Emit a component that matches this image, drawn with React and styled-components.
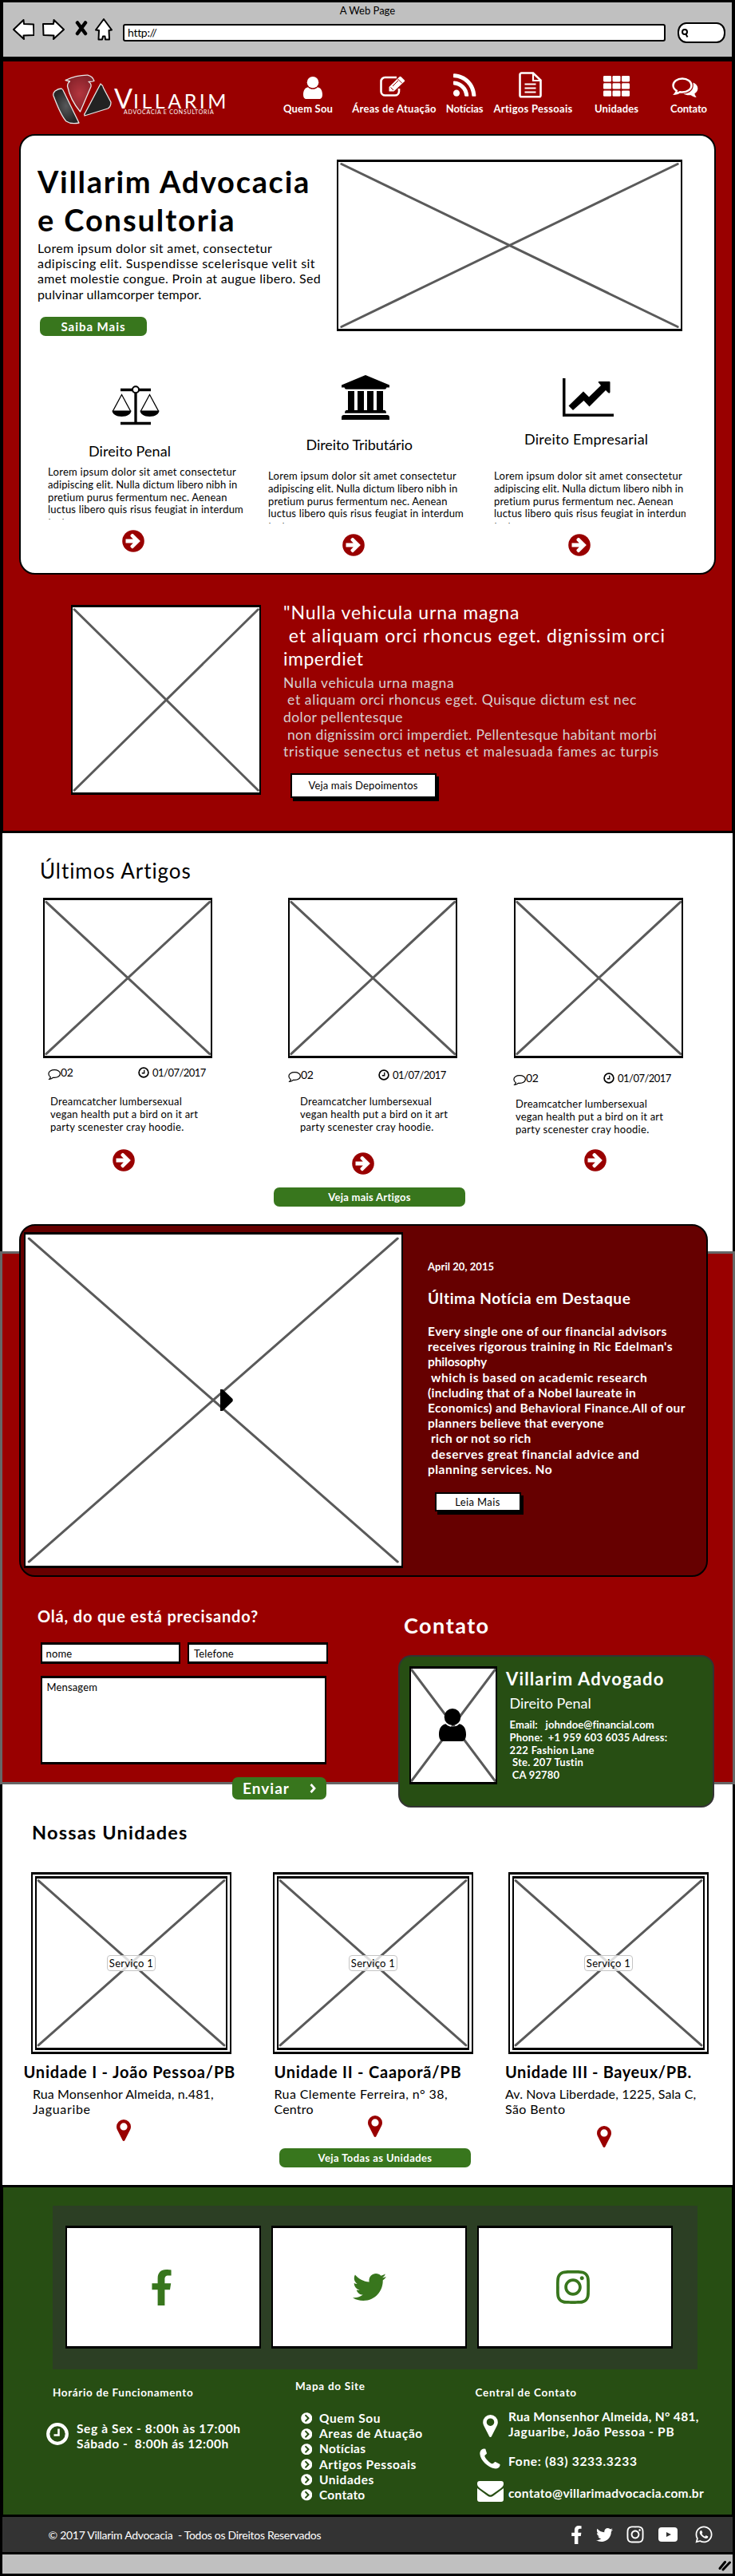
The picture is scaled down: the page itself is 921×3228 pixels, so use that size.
import React from 'react';
import styled, { createGlobalStyle, css } from 'styled-components';
import {
  FaRss, FaFacebookF, FaTwitter, FaInstagram, FaWhatsapp, FaChevronCircleRight,
} from 'react-icons/fa';

const color = {
  red: '#990000',
  darkRed: '#660000',
  green: '#38761d',
  darkGreen: '#274e13',
  chrome: '#c0c0c0',
  ink: '#000',
};

const GlobalStyle = createGlobalStyle`
  *, *::before, *::after { box-sizing: border-box; }
  body { margin: 0; background: #fff; color: #000; font-family: Lato, "Liberation Sans", sans-serif; }
  svg { display: block; flex: none; }
  h1, h2, h3, p, ul { margin: 0; padding: 0; font-weight: inherit; }
`;

/* ---------- shared parts ---------- */

const space = css`
  margin-top: ${(p) => p.$mt || 0}px;
  margin-left: ${(p) => p.$ml || 0}px;
`;

const TextBlock = styled.div`
  ${space}
  font-size: ${(p) => p.$size}px;
  line-height: ${(p) => p.$lh}px;
  font-weight: ${(p) => (p.$bold ? 700 : 400)};
  color: ${(p) => p.$color || 'inherit'};
  white-space: pre;
  ${(p) => p.$clip && css`height: ${p.$clip}px; overflow: hidden;`}
`;

const Line = styled.span`
  display: block;
  letter-spacing: ${(p) => p.$ls}px;
`;

function Copy({ lines, as, ...rest }) {
  return (
    <TextBlock as={as} {...rest}>
      {lines.map(([text, ls], i) => <Line key={i} $ls={ls || 0}>{text}</Line>)}
    </TextBlock>
  );
}

const ImageBox = styled.div`
  ${space}
  position: relative;
  flex: none;
  width: ${(p) => p.$w}px;
  height: ${(p) => p.$h}px;
  background: #fff;
  border: 2px solid #000;
  border-top-width: 3px;
  border-bottom-width: 3px;
`;

const Cross = styled.svg`
  width: 100%;
  height: 100%;
  line { stroke: #5a5a5a; stroke-width: 3; stroke-linecap: round; vector-effect: non-scaling-stroke; }
`;

const Overlay = styled.div`
  position: absolute;
  left: ${(p) => p.$x}px;
  top: ${(p) => p.$y}px;
`;

function Placeholder({ children, ...rest }) {
  return (
    <ImageBox {...rest}>
      <Cross viewBox="0 0 100 100" preserveAspectRatio="none">
        <line x1="0.9" y1="1.2" x2="99.1" y2="98.8" />
        <line x1="99.1" y1="1.2" x2="0.9" y2="98.8" />
      </Cross>
      {children}
    </ImageBox>
  );
}

const GreenButton = styled.button`
  ${space}
  display: flex;
  align-items: center;
  justify-content: center;
  width: ${(p) => p.$w}px;
  height: ${(p) => p.$h || 24}px;
  padding: 0;
  border: 0;
  border-radius: 7px;
  background: ${color.green};
  color: #fff;
  font: 700 ${(p) => p.$size || 13}px/16px Lato, sans-serif;
  letter-spacing: ${(p) => p.$ls || 0}px;
  white-space: pre;
`;

const PlainButton = styled.button`
  ${space}
  display: block;
  width: ${(p) => p.$w}px;
  height: ${(p) => p.$h}px;
  padding: 0;
  border: 2px solid #000;
  background: #fff;
  box-shadow: 3px 4px 0 #000;
  color: #000;
  font: 400 13px/16px Lato, sans-serif;
  letter-spacing: ${(p) => p.$ls}px;
`;

const IconSlot = styled.span`
  ${space}
  display: block;
  flex: none;
  color: ${(p) => p.$color || 'inherit'};
  width: max-content;
`;

const Column = styled.div`
  flex: none;
  width: ${(p) => p.$w}px;
`;

/* ---------- icons ---------- */

const ArrowCircle = () => (
  <svg width="28" height="28" viewBox="0 0 28 28">
    <circle cx="14" cy="14" r="13.8" fill={color.red} />
    <path d="M4.5 11.6h9.3l-3-3.2a1.6 1.6 0 0 1 0-2.2l1-1a1.6 1.6 0 0 1 2.2 0l8.9 8.8-8.9 8.8a1.6 1.6 0 0 1-2.2 0l-1-1a1.6 1.6 0 0 1 0-2.2l3-3.2H4.5z" fill="#fff" />
  </svg>
);

const PinIcon = ({ w = 18, h = 27 }) => (
  <svg width={w} height={h} viewBox="0 0 18 27" fill="currentColor">
    <path fillRule="evenodd" d="M9 0a9 9 0 0 1 9 9c0 1.600-.4 2.900-1 4.100L10.300 26.200a1.500 1.500 0 0 1-2.600 0L1 13.100C.4 11.900 0 10.600 0 9a9 9 0 0 1 9-9zm0 4.300a4.600 4.600 0 1 0 0 9.200 4.600 4.600 0 0 0 0-9.200z" />
  </svg>
);

const ClockIcon = ({ size, stroke }) => (
  <svg width={size} height={size} viewBox="0 0 28 28" fill="none" stroke="currentColor" strokeWidth={stroke}>
    <circle cx="14" cy="14" r="11.800" />
    <path d="M15.500 7.500v8h-6" strokeWidth="2.600" />
  </svg>
);

const PersonIcon = ({ w, h }) => (
  <svg width={w} height={h} viewBox="0 0 34 41" preserveAspectRatio="none" fill="currentColor">
    <ellipse cx="17" cy="10.500" rx="10.300" ry="10.500" />
    <path d="M8.500 19.300C11 22 14 23 17 23s6-1 8.500-3.700c5.500 1 8.500 6 8.500 13.200 0 6-2.500 8.500-5.500 8.500h-23C2.500 41 0 38.500 0 32.500c0-7.200 3-12.200 8.500-13.200z" />
  </svg>
);

const EditIcon = () => (
  <svg width="32" height="26" viewBox="0 0 32 26" fill="none" stroke="#fff">
    <path d="M21 2H6.500A5 5 0 0 0 1.500 7v12.500a5 5 0 0 0 5 5H19a5 5 0 0 0 5-5V16" strokeWidth="2.600" />
    <path d="M11.500 19.500v-5.500L24.500 1.200a1.500 1.500 0 0 1 2.100 0l4 4a1.500 1.500 0 0 1 0 2.100L17.500 19.500z" fill="#fff" stroke="none" />
    <path d="M22.300 3.800l5.500 5.500M13.500 14.500l3.500 3.500M16 13l7-7" stroke={color.red} strokeWidth="1" />
  </svg>
);

const FileIcon = () => (
  <svg width="29" height="33" viewBox="0 0 29 33" fill="none" stroke="#fff" strokeWidth="2.600">
    <path d="M3.500 1.500h14.500L27.500 10.500v19a1.800 1.800 0 0 1-1.800 1.800H3.300a1.800 1.800 0 0 1-1.800-1.800v-26a2 2 0 0 1 2-2z" />
    <path d="M18 2v9h9M7.500 15.500h14M7.500 20.500h14M7.500 25.500h14" strokeWidth="2.200" />
  </svg>
);

const GridIcon = () => (
  <svg width="33" height="26" viewBox="0 0 33 26" fill="#fff">
    {[0, 9.2, 18.4].map((y) => [0, 11.5, 23].map((x) => (
      <rect key={`${x}-${y}`} x={x} y={y} width="10" height="7.400" rx="1.300" />
    )))}
  </svg>
);

const CommentsIcon = () => (
  <svg width="33" height="26" viewBox="0 0 33 26" fill="none" stroke="#fff" strokeWidth="2.400">
    <path d="M13 1.500c6.500 0 11.500 3.700 11.500 8.500s-5 8.500-11.500 8.500c-1 0-2-.1-3-.3-1.800 1.300-3.600 2-6 2.300 1-1.200 1.700-2.300 1.900-3.800C3.200 15.200 1.500 12.800 1.500 10c0-4.800 5-8.500 11.500-8.500z" />
    <path d="M26.500 6.500c3.700 1.500 5.900 4.200 5.900 7.300 0 2.600-1.500 4.900-4 6.500.3 1.700 1 3 2.300 4.700-3-.3-5-1.300-7-2.800-3.300.5-6.900-.1-9.400-1.600 8-.3 14-5 12.200-14.100z" fill="#fff" stroke="none" />
  </svg>
);

const ScalesIcon = () => (
  <svg width="60" height="50" viewBox="0 0 60 50" fill="none" stroke="#000">
    <path d="M11 5.500h38M11 47.500h38M30 8v39" strokeWidth="3.300" />
    <circle cx="30" cy="5.300" r="4" fill="#fff" strokeWidth="2" />
    <path d="M1.500 32L12.500 11.500 23.500 32M36.500 32L47.500 11.500 58.500 32" strokeWidth="1.300" />
    <path d="M.5 31.500h24c0 4-5 7.500-12 7.500s-12-3.500-12-7.500zM35.500 31.500h24c0 4-5 7.500-12 7.500s-12-3.500-12-7.500z" fill="#000" stroke="none" />
  </svg>
);

const BankIcon = () => (
  <svg width="60" height="56" viewBox="0 0 60 56" fill="#000">
    <path d="M30 0L60 12.500V15.500H56.500Q56 17.800 54 17.800H6Q4 17.800 3.500 15.500H0V12.500z" />
    <path d="M8 20h8v24h4V20h8v24h4V20h8v24h4V20h8v24h1.500q2.500 0 2.500 3.800H4Q4 44 6.500 44H8zM3 50h54q3 0 3 3v3H0v-3q0-3 3-3z" />
  </svg>
);

const ChartIcon = () => (
  <svg width="64" height="48" viewBox="0 0 64 48">
    <path d="M0 0h3.500v44.500H64V48H0z" />
    <path d="M7.500 34.500L26 16.500l7 7L48 9 45 5.500Q44 4 46 4H58.500Q59.500 4 59.500 5V17.500Q59 19.500 57 18L54 15 33.500 35.500 26.500 28 13 40z" />
  </svg>
);

const BubbleIcon = () => (
  <svg width="16" height="13" viewBox="0 0 16 13" fill="none" stroke="#000" strokeWidth="1.200">
    <path d="M8.200.7c4 0 7.200 2.100 7.200 4.800s-3.200 4.800-7.200 4.800h-1.600C5.200 11.600 3.600 12.300 1.800 12.400c.9-.9 1.400-1.700 1.500-2.900C1.700 8.600.9 7.100.9 5.500.9 2.800 4.200.7 8.200.7z" />
  </svg>
);

const PlayIcon = () => (
  <svg width="16" height="27" viewBox="0 0 16 27"><path d="M0 0h3L15.500 12Q16 13.500 15.500 15L3 27H0z" /></svg>
);

const PhoneIcon = () => (
  <svg width="26" height="26" viewBox="0 0 26 26" fill="#fff">
    <path d="M5.500.4L7.300.8 9 6.200C9.200 7 6.500 8.300 6.300 9.400c.3 2.800 6.500 9.300 9.500 9.900 1.200.1 3-2.500 4-2.300L25.500 20v1.500C25 24.500 21.500 25.800 18.500 25.300 10.500 24 1 15 .4 7.200.2 4 1.700.8 5.500.4z" />
  </svg>
);

const MailIcon = () => (
  <svg width="33" height="26" viewBox="0 0 33 26" fill="#fff">
    <path d="M3 0h27a3 3 0 0 1 3 3v1c0 2-2 4-4 5.500L19 16.500c-2 1.400-3 1.400-5 0L4 9.500C2 8 0 6 0 4V3a3 3 0 0 1 3-3z" />
    <path d="M0 9l12.500 9.200c3 2 5 2 8 0L33 9v14a3 3 0 0 1-3 3H3a3 3 0 0 1-3-3z" />
  </svg>
);

const VideoIcon = () => (
  <svg width="24" height="18" viewBox="0 0 24 18">
    <rect width="24" height="18" rx="4" fill="#fff" />
    <path d="M10 6l6 3-6 3z" fill="#333" />
  </svg>
);

/* ---------- browser chrome ---------- */

const Chrome = styled.header`
  height: 77px;
  background: ${color.chrome};
  border: solid #000;
  border-width: 3px 4px 6px;
  padding-top: 2px;
`;

const ChromeTitle = styled.div`
  text-align: center;
  font-size: 13px;
  line-height: 16px;
`;

const ChromeBar = styled.div`
  display: flex;
  align-items: flex-start;
  margin-top: 2px;
  padding-left: 12px;
`;

const UrlField = styled.div`
  margin: 7px 0 0 13px;
  width: 680px;
  height: 22px;
  background: #fff;
  border: 2px solid #000;
  border-radius: 3px;
  padding-left: 4px;
  font-size: 14px;
  line-height: 18px;
  letter-spacing: -0.3px;
`;

const SearchField = styled.div`
  margin: 5px 0 0 15px;
  width: 60px;
  height: 26px;
  background: #fff;
  border: 2px solid #000;
  border-radius: 11px / 12px;
  padding: 6px 0 0 2px;
`;

function BrowserTop() {
  const line = { fill: '#fff', stroke: '#000', strokeWidth: 2, strokeLinejoin: 'round' };
  return (
    <Chrome>
      <ChromeTitle>A Web Page</ChromeTitle>
      <ChromeBar>
        <IconSlot $mt={1}><svg width="27" height="26" viewBox="0 0 27 26"><path {...line} d="M1 13L13.500 1l.5 5 12 .5.500 13.500-13 .5.500 4.500z" /></svg></IconSlot>
        <IconSlot $mt={1} $ml={10}><svg width="28" height="26" viewBox="0 0 28 26"><path {...line} d="M27 13L14.500 1l-.5 5L1 6l.5 14 13 .5L14 25z" /></svg></IconSlot>
        <IconSlot $mt={3} $ml={13}><svg width="16" height="19" viewBox="0 0 16 19" fill="none" stroke="#000" strokeWidth="4.500" strokeLinecap="round"><path d="M3 2.500L13 16M13 2.500L3 16" /></svg></IconSlot>
        <IconSlot $ml={9}><svg width="22" height="28" viewBox="0 0 22 28"><path {...line} d="M11 1l10 13.500-3.500.5.500 11.500h-5l-.5-4h-2.500l-1 4H4.500L5 15l-4-.5z" /></svg></IconSlot>
        <UrlField>http://</UrlField>
        <SearchField><svg width="11" height="12" viewBox="0 0 11 12" fill="none" stroke="#000" strokeWidth="2"><circle cx="5" cy="4" r="3" /><path d="M6.500 7L8.500 10.500" /></svg></SearchField>
      </ChromeBar>
    </Chrome>
  );
}

/* ---------- top red section ---------- */

const TopSection = styled.section`
  height: 964px;
  background: ${color.red};
  border: solid #000;
  border-width: 0 4px;
`;

const SiteHeader = styled.div`
  display: flex;
  height: 91px;
  padding-left: 62px;
  color: #fff;
`;

const Wordmark = styled.div`
  width: 141px;
  margin: 37px 0 0 3px;
  font-size: 25px;
  line-height: 24px;
  letter-spacing: 3.5px;
  white-space: nowrap;
  big { font-size: 34px; line-height: 0; letter-spacing: 1px; }
`;

const Tagline = styled.div`
  margin: -2px 0 0 12px;
  font-size: 7px;
  line-height: 8px;
  letter-spacing: 0.75px;
`;

const Nav = styled.nav`
  display: flex;
  margin-left: 71px;
`;

const NavItem = styled.a`
  display: flex;
  flex-direction: column;
  align-items: center;
  width: ${(p) => p.$w}px;
  margin-left: ${(p) => p.$gap}px;
  font-size: 13px;
  font-weight: 700;
  line-height: 16px;
  letter-spacing: ${(p) => p.$ls}px;
  white-space: nowrap;
`;

const NavIcon = styled.span`
  display: flex;
  align-items: flex-end;
  height: 47px;
  padding: 0 ${(p) => p.$right || 0}px ${(p) => p.$bottom ?? 3}px ${(p) => p.$left || 0}px;
  margin-bottom: 4px;
`;

const Logo = () => (
  <IconSlot $mt={16}>
    <svg width="74" height="63" viewBox="0 0 74 63" stroke="#e8e8e8" strokeWidth="1.300" strokeLinejoin="round">
      <defs>
        <radialGradient id="steel"><stop offset="0" stopColor="#58595b" /><stop offset="1" stopColor="#262626" /></radialGradient>
        <radialGradient id="ruby"><stop offset="0" stopColor="#b3363f" /><stop offset="1" stopColor="#87222a" /></radialGradient>
      </defs>
      <path fill="url(#steel)" d="M3 21Q7 18 11 18q2 1 3 4L33 61q-10 2-16-2C11 53 4 35 1 27q-1-3 2-6z" />
      <path fill="url(#ruby)" d="M16 7.500C26 3 36 1 44 1.200c5 1.300 7 4 8 7.300-2 .8-4 1-7 1 2 1 3.500 3 3 6L34.500 47Q22 32 18.500 15q0-4 3-6z" />
      <path fill="#222" d="M60 12q3 2 3.500 5L73 35q0 6-4 8L40 52q-1-2 1-4z" />
    </svg>
  </IconSlot>
);

const nav = [
  { t: 'Quem Sou', w: 62, gap: 0, ls: 0.19, bottom: 0, left: 12, icon: <PersonIcon w={24} h={28} /> },
  { t: 'Áreas de Atuação', w: 106, gap: 24, ls: 0.3, right: 4, icon: <EditIcon /> },
  { t: 'Notícias', w: 47, gap: 11.500, ls: -0.06, icon: <FaRss size={29} viewBox="10 28 438 456" /> },
  { t: 'Artigos Pessoais', w: 99, gap: 13, ls: 0.3, right: 7, bottom: 1, icon: <FileIcon /> },
  { t: 'Unidades', w: 55, gap: 27.500, ls: 0.13, icon: <GridIcon /> },
  { t: 'Contato', w: 46, gap: 40, ls: -0.13, right: 9, bottom: 1, icon: <CommentsIcon /> },
];

const HeroPanel = styled.div`
  width: 873px;
  height: 552px;
  margin-left: 20px;
  background: #fff;
  border: 2px solid #000;
  border-radius: 20px;
`;

const HeroRow = styled.div`
  display: flex;
  height: 270px;
  padding-left: 21px;
`;

const ServiceRow = styled.div`
  display: flex;
  padding-left: 34px;
`;

const loremLines = [
  ['Lorem ipsum dolor sit amet consectetur', 0.28],
  ['adipiscing elit. Nulla dictum libero nibh in', 0.09],
  ['pretium purus fermentum nec. Aenean', 0.15],
  ['luctus libero quis risus feugiat in interdum', 0.18],
  ['tortor', 0.1],
];

const services = [
  { w: 276, icon: <ScalesIcon />, imt: 43, iml: 80, t: 'Direito Penal', ls: 0.07, tmt: 20.700, tml: 51, pmt: 8 },
  { w: 283, icon: <BankIcon />, imt: 30, iml: 92, t: 'Direito Tributário', ls: -0.07, tmt: 20, tml: 47.500, pmt: 20.700 },
  { w: 240, icon: <ChartIcon />, imt: 34, iml: 86, t: 'Direito Empresarial', ls: 0.25, tmt: 17, tml: 38, pmt: 27.700 },
];

const Testimonial = styled.div`
  display: flex;
  padding: 33px 0 0 84.5px;
  color: #fff;
`;

function Top() {
  return (
    <TopSection>
      <SiteHeader>
        <Logo />
        <Wordmark>
          <big>V</big>ILLARIM
          <Tagline>ADVOCACIA E CONSULTORIA</Tagline>
        </Wordmark>
        <Nav>
          {nav.map((n) => (
            <NavItem key={n.t} $w={n.w} $gap={n.gap} $ls={n.ls}>
              <NavIcon $left={n.left} $right={n.right} $bottom={n.bottom}>{n.icon}</NavIcon>
              {n.t}
            </NavItem>
          ))}
        </Nav>
      </SiteHeader>
      <HeroPanel>
        <HeroRow>
          <Column $w={375}>
            <Copy as="h1" $mt={33} $size={38} $lh={48} $bold lines={[['Villarim Advocacia', 1.69], ['e Consultoria', 1.88]]} />
            <Copy as="p" $mt={2} $size={16} $lh={19.2} lines={[
              ['Lorem ipsum dolor sit amet, consectetur', 0.34],
              ['adipiscing elit. Suspendisse scelerisque velit sit', 0.46],
              ['amet molestie congue. Proin at augue libero. Sed', 0.3],
              ['pulvinar ullamcorper tempor.', 0.14],
            ]} />
            <GreenButton $mt={19} $ml={3} $w={134} $size={15} $ls={0.96}>Saiba Mais</GreenButton>
          </Column>
          <Placeholder $mt={29.5} $w={433} $h={215} />
        </HeroRow>
        <ServiceRow>
          {services.map((s) => (
            <Column key={s.t} $w={s.w}>
              <IconSlot $mt={s.imt} $ml={s.iml}>{s.icon}</IconSlot>
              <Copy as="h3" $mt={s.tmt} $ml={s.tml} $size={18} $lh={22} lines={[[s.t, s.ls]]} />
              <Copy as="p" $mt={s.pmt} $size={13} $lh={15.9} $clip={67.5} lines={loremLines} />
              <IconSlot $mt={13} $ml={93}><ArrowCircle /></IconSlot>
            </Column>
          ))}
        </ServiceRow>
      </HeroPanel>
      <Testimonial>
        <Placeholder $mt={4.5} $w={238.5} $h={238} />
        <Column $w={520}>
          <Copy $ml={28} $size={23} $lh={29.2} lines={[
            ['"Nulla vehicula urna magna', 0.9],
            [' et aliquam orci rhoncus eget. dignissim orci', 0.9],
            ['imperdiet', 0.49],
          ]} />
          <Copy as="p" $mt={4} $ml={28} $size={17.5} $lh={21.7} $color="#d6d0d0" lines={[
            ['Nulla vehicula urna magna', 0.52],
            [' et aliquam orci rhoncus eget. Quisque dictum est nec', 0.61],
            ['dolor pellentesque', 0.43],
            [' non dignissim orci imperdiet. Pellentesque habitant morbi', 0.42],
            ['tristique senectus et netus et malesuada fames ac turpis', 0.75],
          ]} />
          <PlainButton $mt={15.5} $ml={36.5} $w={183} $h={31} $ls={0.17}>Veja mais Depoimentos</PlainButton>
        </Column>
      </Testimonial>
    </TopSection>
  );
}

/* ---------- articles ---------- */

const ArticlesSection = styled.section`
  height: 527px;
  background: #fff;
  border: 3px solid #000;
  border-bottom: 0;
  padding-top: 32px;
`;

const CardRow = styled.div`
  display: flex;
  height: ${(p) => p.$h}px;
  margin-top: ${(p) => p.$mt}px;
  padding-left: ${(p) => p.$pl}px;
`;

const Meta = styled.div`
  ${space}
  display: flex;
  align-items: center;
  font-size: 14px;
  line-height: 16px;
`;

const CommentCount = styled.span`
  display: flex;
  align-items: center;
  width: 113px;
  letter-spacing: -0.4px;
  svg { margin-top: 4px; }
`;

const MetaDate = styled.span`
  margin-left: 4px;
  font-size: 13px;
  letter-spacing: -0.52px;
`;

const articles = [
  { w: 307, mmt: 9.5, mml: 6.5, tmt: 19.5, tml: 9.5, amt: 20, aml: 87.5 },
  { w: 283, mmt: 12.5, mml: 0.5, tmt: 16.5, tml: 15.5, amt: 24, aml: 80.5 },
  { w: 230, mmt: 16.5, mml: -0.5, tmt: 15.5, tml: 2.5, amt: 17, aml: 88.5 },
];

function Articles() {
  return (
    <ArticlesSection>
      <Copy as="h2" $ml={47} $size={26} $lh={30} lines={[['Últimos Artigos', 0.94]]} />
      <CardRow $h={363} $mt={19} $pl={50.5}>
        {articles.map((a, i) => (
          <Column key={i} $w={a.w}>
            <Placeholder $w={212.5} $h={201} />
            <Meta $mt={a.mmt} $ml={a.mml}>
              <CommentCount><BubbleIcon />02</CommentCount>
              <ClockIcon size={14} stroke={3.4} />
              <MetaDate>01/07/2017</MetaDate>
            </Meta>
            <Copy as="p" $mt={a.tmt} $ml={a.tml} $size={13} $lh={16} lines={[
              ['Dreamcatcher lumbersexual', 0.24],
              ['vegan health put a bird on it art', 0.19],
              ['party scenester cray hoodie.', 0.28],
            ]} />
            <IconSlot $mt={a.amt} $ml={a.aml}><ArrowCircle /></IconSlot>
          </Column>
        ))}
      </CardRow>
      <GreenButton $ml={340} $w={240} $ls={0.26}>Veja mais Artigos</GreenButton>
    </ArticlesSection>
  );
}

/* ---------- news and contact ---------- */

const NewsSection = styled.section`
  position: relative;
  z-index: 1;
  height: 668px;
  background: ${color.red};
  border: 3px solid #666;
  color: #fff;
`;

const NewsPanel = styled.div`
  display: flex;
  width: 863.5px;
  height: 442px;
  margin: -37px 0 0 20.5px;
  background: ${color.darkRed};
  border: 2px solid #000;
  border-radius: 20px;
`;

const ContactRow = styled.div`
  display: flex;
`;

const FieldRow = styled.div`
  display: flex;
  gap: 9.5px;
  margin: 22px 0 0 47.5px;
`;

const Field = styled.div`
  width: ${(p) => p.$w}px;
  height: ${(p) => p.$h}px;
  margin: ${(p) => p.$margin || 0};
  padding: ${(p) => p.$pad};
  background: #fff;
  border: 2px solid #000;
  border-top-width: 3px;
  border-bottom-width: 3px;
  color: #000;
  font-size: 13px;
  line-height: 16px;
  letter-spacing: 0.15px;
`;

const SendLabel = styled.span`
  margin-right: 25px;
`;

const ProfileCard = styled.div`
  display: flex;
  width: 396px;
  height: 191px;
  margin-top: 22.5px;
  background: ${color.darkGreen};
  border: 2px solid #333;
  border-radius: 16px;
`;

function NewsAndContact() {
  return (
    <NewsSection>
      <NewsPanel>
        <Placeholder $mt={8} $ml={4.5} $w={474.5} $h={421}>
          <Overlay $x={243.5} $y={194}><PlayIcon /></Overlay>
        </Placeholder>
        <Column $w={350}>
          <Copy $mt={43} $ml={31.5} $size={13} $lh={16} $bold lines={[['April 20, 2015', 0.05]]} />
          <Copy as="h2" $mt={21} $ml={31.5} $size={19} $lh={22} $bold lines={[['Última Notícia em Destaque', 0.64]]} />
          <Copy as="p" $mt={21} $ml={31.5} $size={15.5} $lh={19.2} $bold lines={[
            ['Every single one of our financial advisors', 0.5],
            ["receives rigorous training in Ric Edelman's", 0.45],
            ['philosophy', -0.15],
            [' which is based on academic research', 0.54],
            ['(including that of a Nobel laureate in', 0.31],
            ['Economics) and Behavioral Finance.All of our', 0.33],
            ['planners believe that everyone', 0.32],
            [' rich or not so rich', 0.28],
            [' deserves great financial advice and', 0.62],
            ['planning services. No', 0.48],
          ]} />
          <PlainButton $mt={19} $ml={40} $w={108} $h={24} $ls={0.37}>Leia Mais</PlainButton>
        </Column>
      </NewsPanel>
      <ContactRow>
        <Column $w={496}>
          <Copy as="h2" $mt={37.5} $ml={44} $size={20} $lh={22} $bold lines={[['Olá, do que está precisando?', 0.82]]} />
          <FieldRow>
            <Field $w={175} $h={27} $pad="3px 5px">nome</Field>
            <Field $w={176} $h={27} $pad="3px 6px">Telefone</Field>
          </FieldRow>
          <Field $w={358} $h={111} $margin="15px 0 0 47.5px" $pad="3px 6px">Mensagem</Field>
          <GreenButton $mt={16} $ml={288} $w={118} $h={28} $size={19} $ls={1}>
            <SendLabel>Enviar</SendLabel>
            <svg width="8" height="12" viewBox="0 0 8 12" fill="none" stroke="#fff" strokeWidth="2.800"><path d="M1.500 1l4.500 5-4.500 5" /></svg>
          </GreenButton>
        </Column>
        <Column $w={396}>
          <Copy as="h2" $mt={45.5} $ml={7} $size={27} $lh={30} $bold lines={[['Contato', 1.5]]} />
          <ProfileCard>
            <Placeholder $mt={12} $ml={12} $w={110} $h={148}>
              <Overlay $x={35} $y={50}><IconSlot $color="#000"><PersonIcon w={34} h={41} /></IconSlot></Overlay>
            </Placeholder>
            <Column $w={250}>
              <Copy as="h3" $mt={15} $ml={11} $size={22} $lh={26} $bold lines={[['Villarim Advogado', 1.14]]} />
              <Copy $mt={6} $ml={15.5} $size={18} $lh={22} lines={[['Direito Penal', 0]]} />
              <Copy $mt={9} $ml={15.5} $size={13} $lh={15.8} $bold lines={[
                ['Email:   johndoe@financial.com', 0.09],
                ['Phone:  +1 959 603 6035 Adress:', 0.18],
                ['222 Fashion Lane', 0.35],
                [' Ste. 207 Tustin', 0.26],
                [' CA 92780', 0.17],
              ]} />
            </Column>
          </ProfileCard>
        </Column>
      </ContactRow>
    </NewsSection>
  );
}

/* ---------- units ---------- */

const UnitsSection = styled.section`
  height: 502px;
  background: #fff;
  border: solid #000;
  border-width: 0 3px;
  padding-top: 45.5px;
`;

const UnitFrame = styled.div`
  margin-left: ${(p) => p.$ml}px;
  width: 251px;
  height: 227.5px;
  border: 2px solid #000;
  border-top-width: 3px;
  border-bottom-width: 3px;
  padding: 2px 3px;
`;

const Chip = styled.span`
  display: block;
  width: 61px;
  height: 20px;
  border: 1px solid #c4c4c4;
  border-radius: 4px;
  background: rgba(255, 255, 255, 0.8);
  font-size: 13px;
  line-height: 18px;
  letter-spacing: 0.28px;
  text-align: center;
  white-space: nowrap;
`;

const units = [
  { w: 312.5, fml: 9.5, title: ['Unidade I - João Pessoa/PB', 0.8], tml: 0, addr: [['Rua Monsenhor Almeida, n.481,', 0.11], ['Jaguaribe', 0.67]], aml: 11.5, pmt: 4, pml: 116.5 },
  { w: 291, fml: 0, title: ['Unidade II - Caaporã/PB', 0.78], tml: 1.5, addr: [['Rua Clemente Ferreira, n° 38,', 0.4], ['Centro', 0.18]], aml: 1.5, pmt: -1, pml: 119 },
  { w: 260, fml: 4, title: ['Unidade III - Bayeux/PB.', 0.6], tml: 0, addr: [['Av. Nova Liberdade, 1225, Sala C,', 0.12], ['São Bento', 0.38]], aml: 0, pmt: 12, pml: 115 },
];

function Units() {
  return (
    <UnitsSection>
      <Copy as="h2" $ml={37} $size={23.5} $lh={28} $bold lines={[['Nossas Unidades', 1.2]]} />
      <CardRow $h={346} $mt={36.5} $pl={26.5}>
        {units.map((u) => (
          <Column key={u.title[0]} $w={u.w}>
            <UnitFrame $ml={u.fml}>
              <Placeholder $w={241} $h={217.5}>
                <Overlay $x={88} $y={96}><Chip>Serviço 1</Chip></Overlay>
              </Placeholder>
            </UnitFrame>
            <Copy as="h3" $mt={11} $ml={u.tml} $size={20} $lh={22} $bold lines={[u.title]} />
            <Copy $mt={7} $ml={u.aml} $size={16} $lh={19} lines={u.addr} />
            <IconSlot $mt={u.pmt} $ml={u.pml} $color={color.red}><PinIcon /></IconSlot>
          </Column>
        ))}
      </CardRow>
      <GreenButton $ml={347} $w={240} $ls={0.42}>Veja Todas as Unidades</GreenButton>
    </UnitsSection>
  );
}

/* ---------- footer ---------- */

const FooterSection = styled.footer`
  height: 416px;
  background: ${color.darkGreen};
  border: solid #000;
  border-width: 3px 4px;
  padding-top: 23px;
  color: #fff;
`;

const SocialPanel = styled.div`
  display: flex;
  width: 808px;
  height: 205px;
  margin-left: 62px;
  padding: 25px 0 0 16px;
  gap: 13px;
  background: #2c3f24;
`;

const SocialBox = styled.a`
  display: flex;
  align-items: center;
  justify-content: center;
  width: 245px;
  height: 154px;
  padding-right: ${(p) => p.$shift || 0}px;
  background: #fff;
  border: 2px solid #000;
  border-top-width: 3px;
  border-bottom-width: 3px;
  color: ${color.green};
`;

const FooterRow = styled.div`
  display: flex;
  padding-left: 54px;
`;

const InfoLine = styled.div`
  display: flex;
  align-items: flex-start;
  margin-top: ${(p) => p.$mt}px;
`;

const InfoIcon = styled.span`
  display: flex;
  flex: none;
  width: 41.5px;
  padding-left: ${(p) => p.$pl}px;
  margin-top: ${(p) => p.$mt}px;
`;

const SiteMap = styled.ul`
  margin: 23px 0 0 6.5px;
  list-style: none;
  font-size: 15.5px;
  font-weight: 700;
  line-height: 19.2px;
`;

const SiteMapItem = styled.li`
  display: flex;
  align-items: center;
  gap: 9px;
  letter-spacing: ${(p) => p.$ls}px;
`;

const links = [
  ['Quem Sou', 0.6], ['Areas de Atuação', 0.6], ['Notícias', 0.25],
  ['Artigos Pessoais', 0.6], ['Unidades', 0.55], ['Contato', 0.25],
];

const CopyrightBar = styled.div`
  display: flex;
  align-items: center;
  height: 47px;
  background: #333;
  border: solid #000;
  border-width: 0 3px 3px;
  padding-left: 57.5px;
  color: #fff;
`;

const Notice = styled.span`
  width: 650.5px;
  font-size: 14px;
  letter-spacing: -0.29px;
  white-space: pre;
`;

const StatusBar = styled.div`
  display: flex;
  justify-content: flex-end;
  height: 27px;
  padding: 7px 1px 0 0;
  background: ${color.chrome};
  border: 3px solid #000;
  border-top: 0;
`;

function Footer() {
  return (
    <>
      <FooterSection>
        <SocialPanel>
          <SocialBox $shift={5}><FaFacebookF size={45} /></SocialBox>
          <SocialBox><FaTwitter size={42} /></SocialBox>
          <SocialBox $shift={5}><FaInstagram size={48} /></SocialBox>
        </SocialPanel>
        <FooterRow>
          <Column $w={312}>
            <Copy as="h3" $mt={21} $ml={8} $size={13.5} $lh={16} $bold lines={[['Horário de Funcionamento', 0.65]]} />
            <InfoLine $mt={28}>
              <IconSlot $mt={2}><ClockIcon size={28} stroke={4.2} /></IconSlot>
              <Copy $ml={10} $size={15.5} $lh={19.2} $bold lines={[['Seg à Sex - 8:00h às 17:00h', 0.62], ['Sábado -  8:00h ás 12:00h', 0.5]]} />
            </InfoLine>
          </Column>
          <Column $w={225.5}>
            <Copy as="h3" $mt={13} $size={13.5} $lh={16} $bold lines={[['Mapa do Site', 0.73]]} />
            <SiteMap>
              {links.map(([t, ls]) => (
                <SiteMapItem key={t} $ls={ls}><FaChevronCircleRight size={14.5} />{t}</SiteMapItem>
              ))}
            </SiteMap>
          </Column>
          <Column $w={310}>
            <Copy as="h3" $mt={21} $size={13.5} $lh={16} $bold lines={[['Central de Contato', 0.76]]} />
            <InfoLine $mt={12.5}>
              <InfoIcon $pl={9.5} $mt={7.5}><PinIcon w={19} h={28} /></InfoIcon>
              <Copy $size={15.5} $lh={19.2} $bold lines={[['Rua Monsenhor Almeida, N° 481,', 0.33], ['Jaguaribe, João Pessoa - PB', 0.69]]} />
            </InfoLine>
            <InfoLine $mt={18.5}>
              <InfoIcon $pl={5.5} $mt={-7.5}><PhoneIcon /></InfoIcon>
              <Copy $size={15.5} $lh={19.2} $bold lines={[['Fone: (83) 3233.3233', 0.7]]} />
            </InfoLine>
            <InfoLine $mt={20.5}>
              <InfoIcon $pl={2.5} $mt={-6}><MailIcon /></InfoIcon>
              <Copy $size={15.5} $lh={19.2} $bold lines={[['contato@villarimadvocacia.com.br', 0.29]]} />
            </InfoLine>
          </Column>
        </FooterRow>
      </FooterSection>
      <CopyrightBar>
        <Notice>© 2017 Villarim Advocacia  - Todos os Direitos Reservados</Notice>
        <FaFacebookF size={23} viewBox="22 0 280 512" width={14} />
        <IconSlot $ml={13}><FaTwitter size={21} /></IconSlot>
        <IconSlot $ml={16}><FaInstagram size={24} /></IconSlot>
        <IconSlot $ml={17}><VideoIcon /></IconSlot>
        <IconSlot $ml={21}><FaWhatsapp size={24} /></IconSlot>
      </CopyrightBar>
      <StatusBar>
        <svg width="17" height="14" viewBox="0 0 17 14" stroke="#000" strokeWidth="3" strokeLinecap="round"><path d="M2 10.500L8.500 2.500M6 12L14.500 3" /></svg>
      </StatusBar>
    </>
  );
}

const Page = styled.main`
  width: 921px;
  background: #fff;
`;

export default function App() {
  return (
    <Page>
      <GlobalStyle />
      <BrowserTop />
      <Top />
      <Articles />
      <NewsAndContact />
      <Units />
      <Footer />
    </Page>
  );
}
